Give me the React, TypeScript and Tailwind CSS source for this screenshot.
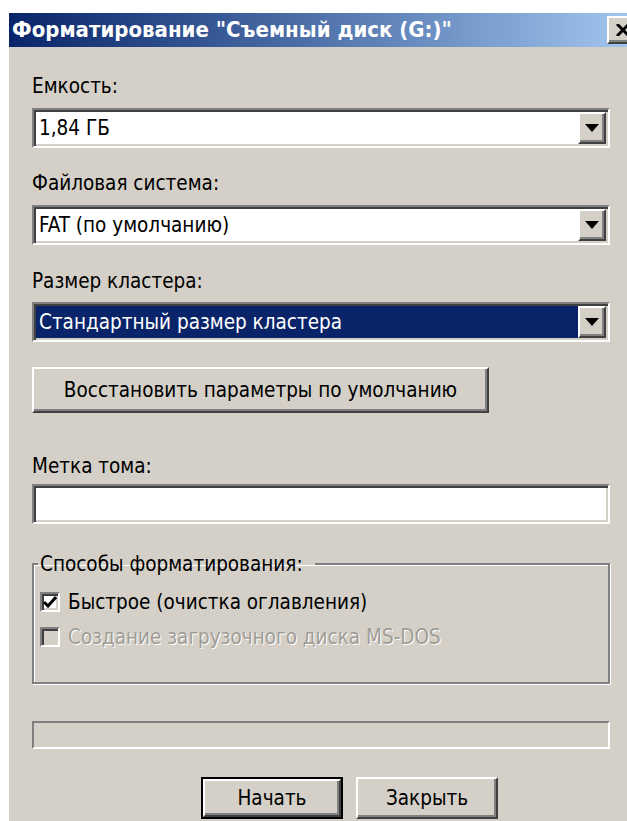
import React from 'react';

// Classic 3D bevels, drawn at double scale
const sunken =
  'border-2 border-t-[#808080] border-l-[#808080] border-b-white border-r-white shadow-[inset_2px_2px_0_#404040,inset_-2px_-2px_0_#d4d0c8]';
const raised =
  'border-2 border-t-white border-l-white border-b-[#404040] border-r-[#404040] shadow-[inset_-2px_-2px_0_#808080]';

const DropButton: React.FC = () => (
  <div className={`w-[28px] h-full bg-[#d4d0c8] flex items-center justify-center ${raised}`}>
    <svg width="14" height="8" viewBox="0 0 14 8">
      <path d="M0 0 H14 L7 8 Z" fill="#000" />
    </svg>
  </div>
);

const Combo: React.FC<{ value: string; selected?: boolean }> = ({ value, selected }) => (
  <div className={`h-[40px] w-full bg-white flex items-stretch p-[2px] ${sunken}`}>
    <div
      className={`flex-1 flex items-center pl-[3px] ${
        selected ? 'bg-[#0a246a] text-white' : 'text-black'
      }`}
    >
      {value}
    </div>
    <DropButton />
  </div>
);

const Checkbox: React.FC<{ checked?: boolean; disabled?: boolean; label: string }> = ({
  checked,
  disabled,
  label,
}) => (
  <div className="flex items-center h-[35px]">
    <div
      className={`w-[20px] h-[20px] flex items-center justify-center ${
        disabled ? 'bg-[#d4d0c8]' : 'bg-white'
      } ${sunken}`}
    >
      {checked && (
        <svg width="14" height="12" viewBox="0 0 14 12">
          <path d="M1 6 L5 10 L13 1" stroke="#000" strokeWidth="3" fill="none" />
        </svg>
      )}
    </div>
    <span
      className={`ml-[8px] ${disabled ? 'text-[#a09d96] [text-shadow:1px_1px_0_#fff]' : 'text-black'}`}
    >
      {label}
    </span>
  </div>
);

export default function App() {
  return (
    <div className="w-[627px] h-[821px] overflow-hidden bg-white pl-[9px] pt-[13px] font-['DejaVu_Sans_Condensed','Liberation_Sans',sans-serif] text-[20.5px] leading-[24px]">
      <div className="w-[636px] h-[900px] bg-[#d4d0c8] flex flex-col">
        {/* Title bar */}
        <div className="h-[34px] shrink-0 flex items-center justify-between bg-gradient-to-r from-[#0a246a] to-[#a6caf0] pl-[3px] pr-[6px]">
          <span className="text-white font-bold text-[22px]">
            Форматирование "Съемный диск (G:)"
          </span>
          <div className={`w-[32px] h-[28px] bg-[#d4d0c8] flex items-center justify-center ${raised}`}>
            <svg width="14" height="12" viewBox="0 0 14 12">
              <path d="M1 0 L13 12 M13 0 L1 12" stroke="#000" strokeWidth="3" />
            </svg>
          </div>
        </div>

        <div className="pl-[23px] w-[601px] flex flex-col text-black">
          <div className="mt-[27px]">Емкость:</div>
          <div className="mt-[10px]">
            <Combo value="1,84 ГБ" />
          </div>

          <div className="mt-[23px]">Файловая система:</div>
          <div className="mt-[10px]">
            <Combo value="FAT (по умолчанию)" />
          </div>

          <div className="mt-[24px]">Размер кластера:</div>
          <div className="mt-[9px]">
            <Combo value="Стандартный размер кластера" selected />
          </div>

          <button
            className={`mt-[25px] w-[457px] h-[46px] bg-[#d4d0c8] flex items-center justify-center ${raised}`}
          >
            Восстановить параметры по умолчанию
          </button>

          <div className="mt-[41px]">Метка тома:</div>
          <div className={`mt-[6px] h-[40px] w-full bg-white ${sunken}`} />

          {/* Format options group */}
          <fieldset className="mt-[28px] h-[132px] border-2 border-[#808080] shadow-[inset_1px_1px_0_#fff,1px_1px_0_#fff] px-[6px] pt-[8px]">
            <legend className="-ml-[2px] pl-[2px] pr-[12px]">Способы форматирования:</legend>
            <Checkbox checked label="Быстрое (очистка оглавления)" />
            <Checkbox disabled label="Создание загрузочного диска MS-DOS" />
          </fieldset>

          {/* Progress bar */}
          <div className="mt-[37px] h-[28px] w-full border-2 border-t-[#808080] border-l-[#808080] border-b-white border-r-white" />

          <div className="mt-[28px] flex gap-[13px] pl-[169px]">
            <button className="w-[142px] h-[42px] border-2 border-black">
              <div className={`w-full h-full bg-[#d4d0c8] flex items-center justify-center ${raised}`}>
                Начать
              </div>
            </button>
            <button
              className={`w-[142px] h-[42px] bg-[#d4d0c8] flex items-center justify-center ${raised}`}
            >
              Закрыть
            </button>
          </div>
        </div>
      </div>
    </div>
  );
}
